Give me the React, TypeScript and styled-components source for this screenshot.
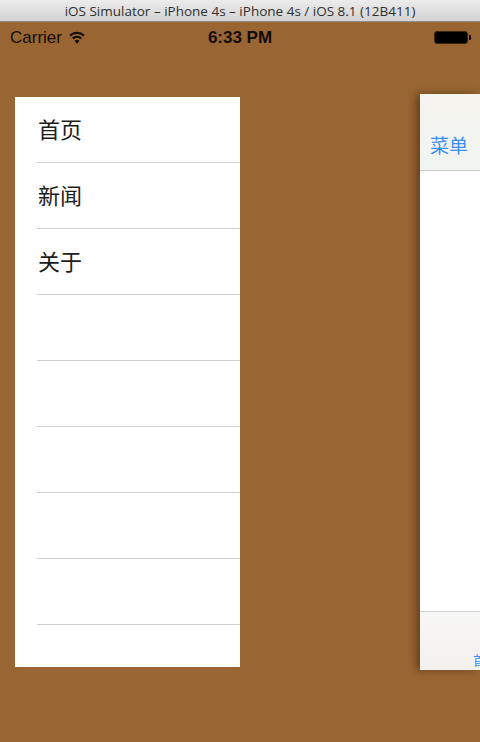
import React from "react";
import styled, { createGlobalStyle } from "styled-components";

const Global = createGlobalStyle`
  html, body { margin: 0; padding: 0; }
  body {
    width: 480px;
    height: 742px;
    overflow: hidden;
    background: #996633;
    font-family: "Liberation Sans", "Noto Sans CJK SC", sans-serif;
  }
`;

const Window = styled.div`
  width: 480px;
  height: 742px;
  display: flex;
  flex-direction: column;
  overflow: hidden;
`;

const TitleBar = styled.div`
  height: 21px;
  flex: none;
  background: linear-gradient(#ececec, #d3d3d3);
  border-bottom: 1px solid #8d8d8d;
  display: flex;
  align-items: center;
  justify-content: center;
  font-family: "Open Sans", "Liberation Sans", sans-serif;
  font-size: 13.5px;
  color: #2f2f2f;
`;

const Screen = styled.div`
  flex: 1;
  background: #996633;
  display: flex;
  flex-direction: column;
`;

const StatusBar = styled.div`
  height: 30px;
  display: grid;
  grid-template-columns: 1fr auto 1fr;
  align-items: center;
  padding: 1px 10px 0 10px;
  box-sizing: border-box;
  color: #120c05;
`;

const Carrier = styled.div`
  display: flex;
  align-items: center;
  gap: 7px;
  font-size: 17px;
`;

const Time = styled.div`
  font-size: 17px;
  font-weight: bold;
`;

const BatteryWrap = styled.div`
  display: flex;
  justify-content: flex-end;
  align-items: center;
  padding-right: 2px;
`;

const Battery = styled.div`
  width: 32px;
  height: 11px;
  border: 1px solid #3a2812;
  border-radius: 3px;
  background: #000;
  position: relative;
  &::after {
    content: "";
    position: absolute;
    right: -4px;
    top: 3px;
    width: 2px;
    height: 5px;
    background: #000;
    border-radius: 0 1px 1px 0;
  }
`;

const Content = styled.div`
  display: flex;
  align-items: flex-start;
  padding-top: 42px;
  padding-left: 15px;
`;

const Menu = styled.div`
  width: 225px;
  height: 570px;
  margin-top: 3px;
  background: #fff;
  overflow: hidden;
  flex: none;
`;

const Row = styled.div`
  height: 65px;
  margin-left: 22px;
  border-bottom: 1px solid #cfcfcf;
  display: flex;
  align-items: center;
  padding: 0 0 4px 1px;
  box-sizing: content-box;
  height: 61px;
  font-family: "Noto Sans CJK SC", sans-serif;
  font-size: 22px;
  color: #1c1c1c;
`;

const Main = styled.div`
  margin-left: 180px;
  width: 60px;
  height: 576px;
  flex: none;
  overflow: hidden;
  display: flex;
  flex-direction: column;
  background: #fff;
  box-shadow: -4px 0 8px rgba(40, 20, 0, 0.45);
`;

const NavBar = styled.div`
  height: 77px;
  flex: none;
  background: linear-gradient(#f5f3ee, #f0f5f0);
  border-bottom: 1px solid #c9c9c9;
  display: flex;
  align-items: flex-end;
  padding: 0 0 12px 10px;
  box-sizing: border-box;
`;

const NavButton = styled.span`
  font-family: "Noto Sans CJK SC", sans-serif;
  font-size: 19px;
  color: #3a8ef2;
  white-space: nowrap;
`;

const Body = styled.div`
  flex: 1;
  background: #fff;
`;

const TabBar = styled.div`
  height: 59px;
  flex: none;
  border-top: 1px solid #d2d2d2;
  background: linear-gradient(#f7f7f6, #f3f1ee);
  display: flex;
  align-items: flex-end;
  padding: 0 0 1px 53px;
  box-sizing: border-box;
`;

const TabLabel = styled.span`
  font-family: "Noto Sans CJK SC", sans-serif;
  font-size: 13px;
  color: #3a8ef2;
  white-space: nowrap;
`;

const Wifi = () => (
  <svg width="16" height="13" viewBox="0 0 16 13">
    <path d="M1 4.6 A10.5 10.5 0 0 1 15 4.6" stroke="#120c05" strokeWidth="2.2" fill="none" />
    <path d="M3.7 7.4 A6.5 6.5 0 0 1 12.3 7.4" stroke="#120c05" strokeWidth="2.2" fill="none" />
    <path d="M5.5 9.9 L8 12.8 L10.5 9.9 A3.4 3.4 0 0 0 5.5 9.9 Z" fill="#120c05" />
  </svg>
);

const items = ["首页", "新闻", "关于", "", "", "", "", "", ""];

export default function App() {
  return (
    <>
      <Global />
      <Window>
        <TitleBar>iOS Simulator – iPhone 4s – iPhone 4s / iOS 8.1 (12B411)</TitleBar>
        <Screen>
          <StatusBar>
            <Carrier>
              Carrier <Wifi />
            </Carrier>
            <Time>6:33 PM</Time>
            <BatteryWrap>
              <Battery />
            </BatteryWrap>
          </StatusBar>
          <Content>
            <Menu>
              {items.map((t, i) => (
                <Row key={i}>{t}</Row>
              ))}
            </Menu>
            <Main>
              <NavBar>
                <NavButton>菜单</NavButton>
              </NavBar>
              <Body />
              <TabBar>
                <TabLabel>首页</TabLabel>
              </TabBar>
            </Main>
          </Content>
        </Screen>
      </Window>
    </>
  );
}
